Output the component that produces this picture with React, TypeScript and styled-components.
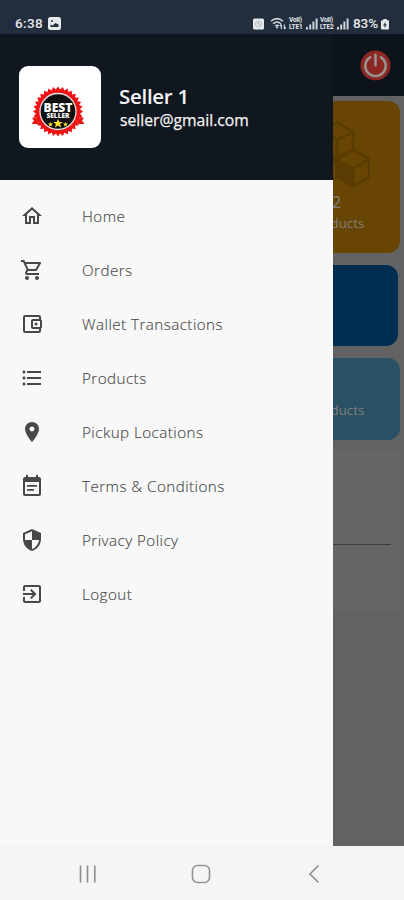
import React from "react";
import styled, { createGlobalStyle } from "styled-components";
import {
  MdOutlineHome,
  MdOutlineShoppingCart,
  MdOutlineAccountBalanceWallet,
  MdFormatListBulleted,
  MdLocationOn,
  MdSecurity,
  MdExitToApp,
} from "react-icons/md";

const GlobalStyle = createGlobalStyle`
  * { box-sizing: border-box; }
  body { margin: 0; font-family: "Open Sans", "Noto Sans", sans-serif; }
`;

const Screen = styled.div`
  width: 404px;
  height: 900px;
  display: flex;
  flex-direction: column;
  overflow: hidden;
  background: #f5f5f5;
`;

const StatusBar = styled.header`
  height: 34px;
  flex: none;
  display: flex;
  align-items: flex-end;
  justify-content: space-between;
  padding: 0 15px 3px 15px;
  background: #222e3d;
  color: #e6e9ec;
  font: 500 13.5px/15px Roboto, sans-serif;
`;

const StatusGroup = styled.div<{ $gap: number }>`
  display: flex;
  align-items: center;
  gap: ${(p) => p.$gap}px;
  height: 15px;
  svg { display: block; }
`;

const Clock = styled.span`
  letter-spacing: 0.35px;
`;

const Battery = styled.span`
  margin: 0 1px 0 2px;
  letter-spacing: -0.1px;
`;

const Volte = styled.span`
  display: flex;
  flex-direction: column;
  width: 15px;
  font: 700 6.5px/7px Roboto, sans-serif;
  letter-spacing: -0.2px;
`;

const Stage = styled.div`
  position: relative;
  flex: 1;
  overflow: hidden;
`;

const Dashboard = styled.main`
  height: 100%;
  display: flex;
  flex-direction: column;
  background: #626262;
`;

const AppBar = styled.div`
  height: 62px;
  flex: none;
  display: flex;
  align-items: center;
  justify-content: flex-end;
  padding-right: 13px;
  background: #0d131a;
`;

const CardGrid = styled.div`
  display: grid;
  grid-template-columns: repeat(3, 1fr);
  grid-template-rows: 152px 81px 82px;
  row-gap: 12px;
  column-gap: 8px;
  padding: 5px 4px 0 4px;
`;

const Card = styled.section<{ $tone: string; $wide?: boolean }>`
  grid-column: ${(p) => (p.$wide ? "1 / -1" : "3")};
  margin-right: ${(p) => (p.$wide ? "2px" : "0")};
  display: flex;
  flex-direction: column;
  align-items: center;
  justify-content: flex-end;
  padding-bottom: 19px;
  border-radius: 12px;
  background: ${(p) => p.$tone};
  color: #81807e;
  font-size: 13.3px;
  line-height: 22px;
  svg { margin-bottom: 4px; }
`;

const Count = styled.span`
  font-size: 15.5px;
  line-height: 20px;
`;

const Panel = styled.section`
  height: 160px;
  margin: 10px 5px 0 4px;
  padding: 94px 8px 0;
  background: #666666;
`;

const Rule = styled.div`
  height: 1px;
  background: #3c3c3c;
`;

const Drawer = styled.aside`
  position: absolute;
  inset: 0 auto 0 0;
  width: 333px;
  display: flex;
  flex-direction: column;
  background: #f8f8f8;
`;

const Profile = styled.div`
  height: 146px;
  flex: none;
  display: flex;
  align-items: center;
  gap: 18px;
  padding-left: 19px;
  background: #10171e;
  color: #f3f4f5;
`;

const Avatar = styled.div`
  width: 82px;
  height: 82px;
  display: flex;
  align-items: center;
  justify-content: center;
  padding-top: 9px;
  padding-right: 5px;
  border-radius: 9px;
  background: #fff;
`;

const Identity = styled.div`
  display: flex;
  flex-direction: column;
  padding-top: 1px;
`;

const SellerName = styled.strong`
  font-size: 20.5px;
  line-height: 26px;
  font-weight: 600;
  letter-spacing: -0.3px;
`;

const Email = styled.span`
  padding-left: 1px;
  font-size: 15.7px;
  line-height: 23px;
  -webkit-text-stroke: 0.25px currentColor;
`;

const Menu = styled.nav`
  display: flex;
  flex-direction: column;
  padding-top: 9px;
`;

const MenuRow = styled.a`
  height: 54px;
  display: flex;
  align-items: center;
  gap: 38px;
  padding-left: 20px;
  color: #484848;
`;

const MenuLabel = styled.span`
  padding-bottom: 1px;
  font-size: 15.2px;
  font-weight: 300;
  letter-spacing: 0.45px;
  -webkit-text-stroke: 0.15px currentColor;
`;

const NavBar = styled.footer`
  height: 54px;
  flex: none;
  display: grid;
  grid-template-columns: 116px 1fr 116px;
  align-items: center;
  justify-items: center;
  padding: 1px 32px 0 30px;
  background: #f5f5f5;
`;

const EventNoteIcon = ({ size = 24 }: { size?: number }) => (
  <svg width={size} height={size} viewBox="0 0 24 24" fill="currentColor">
    <path fillRule="evenodd" d="M19 3h-1V1h-2v2H8V1H6v2H5a2 2 0 0 0-2 2v15a2 2 0 0 0 2 2h14a2 2 0 0 0 2-2V5a2 2 0 0 0-2-2zm0 17H5V8h14z" />
    <path d="M7 11h10v1.800H7zM7 15h7v1.800H7z" />
  </svg>
);

const menu: { label: string; Icon: React.ComponentType<{ size?: number }> }[] = [
  { label: "Home", Icon: MdOutlineHome },
  { label: "Orders", Icon: MdOutlineShoppingCart },
  { label: "Wallet Transactions", Icon: MdOutlineAccountBalanceWallet },
  { label: "Products", Icon: MdFormatListBulleted },
  { label: "Pickup Locations", Icon: MdLocationOn },
  { label: "Terms & Conditions", Icon: EventNoteIcon },
  { label: "Privacy Policy", Icon: MdSecurity },
  { label: "Logout", Icon: MdExitToApp },
];

const PictureIcon = () => (
  <svg width="13" height="13" viewBox="0 0 13 13">
    <rect width="13" height="13" rx="2.5" fill="#e6e9ec" />
    <path d="M2.5 10V7.5l2 1 3-2.5 3 1.5V10z" fill="#222e3d" />
    <circle cx="4" cy="4" r="1" fill="#222e3d" />
  </svg>
);

const AlarmIcon = () => (
  <svg width="11" height="12" viewBox="0 0 11 12">
    <rect y=".5" width="11" height="11" rx="1.5" fill="#e6e9ec" />
    <circle cx="5.500" cy="6" r="3" fill="none" stroke="#b4bac0" />
    <path d="M5.500 4v2.300H7" fill="none" stroke="#a0a8b0" />
  </svg>
);

const WifiIcon = () => (
  <svg width="17" height="13" viewBox="0 0 17 13" fill="none" stroke="#d5d9de" strokeWidth="1.5">
    <path d="M1 4.200Q7 -1 13 4.200M3 6.800q4-3.500 8 0M5.200 9q1.800-1.600 3.600 0" />
    <path d="M7 9.500v1.800" strokeWidth="2" />
    <path d="M11.300 12V7.500M9.800 9l1.500-1.700M14.300 7.500V12M15.800 10.300L14.300 12" strokeWidth="1.200" />
  </svg>
);

const SignalIcon = () => (
  <svg width="12" height="12" viewBox="0 0 12 12" fill="#cfd4d9">
    <path d="M0 9h2v2.500H0zM3.200 6.500h2v5h-2zM6.400 3.500h2v8h-2zM9.600.5h2v11h-2z" />
  </svg>
);

const BatteryIcon = () => (
  <svg width="8" height="12" viewBox="0 0 8 12">
    <path d="M2.300 1h3.400v1.300H7q1 0 1 1V10.500q0 1-1 1H1q-1 0-1-1V3.300q0-1 1-1h1.300z" fill="#e6e9ec" />
    <path d="M4.500 3.800L2 7.400h1.700L3.300 10 6 6.500H4.300z" fill="#222e3d" />
  </svg>
);

const PowerIcon = () => (
  <svg width="31" height="31" viewBox="0 0 32 32" fill="none" strokeLinecap="round">
    <circle cx="16" cy="16" r="15.500" fill="#8c2824" />
    <path d="M10.500 7.500a10.500 10.500 0 1 0 11 0M16 4.800v11" stroke="#999492" strokeWidth="2.600" />
  </svg>
);

const BoxesIcon = () => (
  <svg width="66" height="68" viewBox="0 0 66 68" fill="none" stroke="#5a3b02" strokeWidth="2.500" strokeLinejoin="round">
    <path d="M17 10L33 2l16 10v18l-16 7-16-7zM17 10l16 10 16-8M33 20v17" />
    <path d="M1 40l16-10 16 10v17l-16 9-16-9zM1 40l16 9 16-9M17 49v17" />
    <path d="M33 40l16-10 16 9v18l-16 9-16-9z" />
    <path d="M33 40l16 9v17l-16-9z" fill="#5a3b02" />
    <path d="M49 49l16-10" />
  </svg>
);

const sealPoints = Array.from({ length: 64 }, (_, i) => {
  const r = i % 2 ? 22 : 25;
  const a = (i * Math.PI) / 32;
  return `${27 + r * Math.sin(a)},${25.5 - r * Math.cos(a)}`;
}).join(" ");

const BestSellerBadge = () => (
  <svg width="54" height="51" viewBox="0 0 54 51">
    <path d="M5 31L1 32l2 2.500L.500 38H8zM49 31l4 1-2 2.500 2.500 3.500H46z" fill="#e31616" />
    <polygon points={sealPoints} fill="#f01212" />
    <circle cx="27" cy="25.500" r="18" fill="#111" stroke="#dedede" strokeWidth="1.300" />
    <g textAnchor="middle" fill="#fff" fontFamily="Open Sans, sans-serif" fontWeight="800">
      <text x="27" y="25.500" fontSize="12.500" textLength="29" lengthAdjust="spacingAndGlyphs" stroke="#111" strokeWidth="1.500" paintOrder="stroke">BEST</text>
      <text x="27" y="31.700" fontSize="7" textLength="23" lengthAdjust="spacingAndGlyphs">SELLER</text>
    </g>
    <g fill="#ffe22a">
      <path d="M27 33l1.300 3h3.500l-2.700 2.100 1 3.300-3.100-2-3.100 2 1-3.300-2.700-2.100h3.500z" />
      <path d="M19.500 36l.7 1.500h1.800l-1.400 1.200.5 1.700-1.600-1-1.600 1 .5-1.700-1.400-1.200h1.800z" />
      <path d="M34.500 36l.7 1.500H37l-1.400 1.200.5 1.700-1.600-1-1.600 1 .5-1.700-1.400-1.200h1.800z" />
    </g>
  </svg>
);

const RecentsIcon = () => (
  <svg width="24" height="20" viewBox="0 0 24 20" stroke="#8c8c8c" strokeWidth="1.600">
    <path d="M4.500 1.500v17M11.500 1.500v17M18.800 1.500v17" />
  </svg>
);

const HomeKeyIcon = () => (
  <svg width="20" height="20" viewBox="0 0 20 20" fill="none" stroke="#939393" strokeWidth="1.600">
    <rect x="1.500" y="1.500" width="17" height="17" rx="5" />
  </svg>
);

const BackIcon = () => (
  <svg width="20" height="20" viewBox="0 0 20 20" fill="none" stroke="#8c8c8c" strokeWidth="1.500">
    <path d="M14.500 1.500L6 10l8.500 8.500" />
  </svg>
);

export default function App() {
  return (
    <Screen>
      <GlobalStyle />
      <StatusBar>
        <StatusGroup $gap={5}>
          <Clock>6:38</Clock>
          <PictureIcon />
        </StatusGroup>
        <StatusGroup $gap={2}>
          <AlarmIcon />
          <span />
          <span />
          <WifiIcon />
          <Volte><span>VoII)</span><span>LTE1</span></Volte>
          <SignalIcon />
          <Volte><span>VoII)</span><span>LTE2</span></Volte>
          <SignalIcon />
          <Battery>83%</Battery>
          <BatteryIcon />
        </StatusGroup>
      </StatusBar>
      <Stage>
        <Dashboard>
          <AppBar>
            <PowerIcon />
          </AppBar>
          <CardGrid>
            <Card $tone="#694503">
              <BoxesIcon />
              <Count>2</Count>
              <span>Products</span>
            </Card>
            <Card $tone="#002d50" $wide />
            <Card $tone="#2a5064">Products</Card>
          </CardGrid>
          <Panel>
            <Rule />
          </Panel>
        </Dashboard>
        <Drawer>
          <Profile>
            <Avatar>
              <BestSellerBadge />
            </Avatar>
            <Identity>
              <SellerName>Seller 1</SellerName>
              <Email>seller@gmail.com</Email>
            </Identity>
          </Profile>
          <Menu>
            {menu.map(({ label, Icon }) => (
              <MenuRow key={label}>
                <Icon size={24} />
                <MenuLabel>{label}</MenuLabel>
              </MenuRow>
            ))}
          </Menu>
        </Drawer>
      </Stage>
      <NavBar>
        <RecentsIcon />
        <HomeKeyIcon />
        <BackIcon />
      </NavBar>
    </Screen>
  );
}
